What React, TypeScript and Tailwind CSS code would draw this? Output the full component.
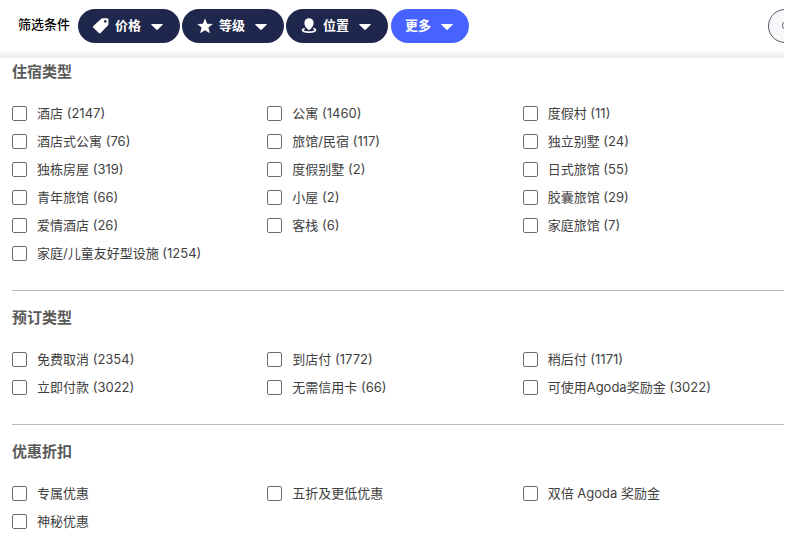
import { useState, type ReactNode } from 'react'

interface FilterOption {
  label: string
  count?: number
}

interface FilterGroup {
  title: string
  options: FilterOption[]
}

const groups: FilterGroup[] = [
  {
    title: '住宿类型',
    options: [
      { label: '酒店', count: 2147 },
      { label: '公寓', count: 1460 },
      { label: '度假村', count: 11 },
      { label: '酒店式公寓', count: 76 },
      { label: '旅馆/民宿', count: 117 },
      { label: '独立别墅', count: 24 },
      { label: '独栋房屋', count: 319 },
      { label: '度假别墅', count: 2 },
      { label: '日式旅馆', count: 55 },
      { label: '青年旅馆', count: 66 },
      { label: '小屋', count: 2 },
      { label: '胶囊旅馆', count: 29 },
      { label: '爱情酒店', count: 26 },
      { label: '客栈', count: 6 },
      { label: '家庭旅馆', count: 7 },
      { label: '家庭/儿童友好型设施', count: 1254 },
    ],
  },
  {
    title: '预订类型',
    options: [
      { label: '免费取消', count: 2354 },
      { label: '到店付', count: 1772 },
      { label: '稍后付', count: 1171 },
      { label: '立即付款', count: 3022 },
      { label: '无需信用卡', count: 66 },
      { label: '可使用Agoda奖励金', count: 3022 },
    ],
  },
  {
    title: '优惠折扣',
    options: [
      { label: '专属优惠' },
      { label: '五折及更低优惠' },
      { label: '双倍 Agoda 奖励金' },
      { label: '神秘优惠' },
    ],
  },
]

function TagIcon() {
  return (
    <svg viewBox="0 0 18 18" className="w-[18px] h-[18px] mr-[5px]" fill="currentColor" aria-hidden="true">
      <path
        fillRule="evenodd"
        d="M10.5 1.3h4.7a1.2 1.2 0 0 1 1.2 1.2v4.8a1.6 1.6 0 0 1-.5 1.1l-7.3 7.7a1.2 1.2 0 0 1-1.7 0L1.3 10.7a1.2 1.2 0 0 1 .1-1.7l7.9-7.2a1.8 1.8 0 0 1 1.2-.5ZM13.3 3.1a1.3 1.3 0 1 0 0 2.6 1.3 1.3 0 0 0 0-2.6Z"
      />
    </svg>
  )
}

function StarIcon() {
  return (
    <svg viewBox="0 0 18 18" className="w-[18px] h-[18px] mr-[5px]" fill="currentColor" aria-hidden="true">
      <path d="M9 1.2 11.1 6.7 16.8 7 12.4 10.6 13.9 16.3 9 13.2 4.1 16.3 5.6 10.6 1.2 7 6.9 6.7Z" />
    </svg>
  )
}

function LocationIcon() {
  return (
    <svg viewBox="0 0 18 18" className="w-[18px] h-[18px] mr-[5px]" fill="currentColor" aria-hidden="true">
      <path d="M9 1.2a4.5 4.5 0 0 1 4.6 4.7c0 2.5-1.3 4.4-2.6 5.6-.6.6-1 1.5-2 1.5s-1.4-.9-2-1.5c-1.3-1.2-2.6-3.1-2.6-5.6A4.5 4.5 0 0 1 9 1.2Z" />
      <path
        d="M4 11.7c-.9.3-1.5.8-1.5 1.3 0 1.2 2.9 2.2 6.5 2.2s6.500-1 6.500-2.200c0-.5-.6-1-1.500-1.300"
        fill="none"
        stroke="currentColor"
        strokeWidth="1.7"
        strokeLinecap="round"
      />
    </svg>
  )
}

interface FilterPillProps {
  label: string
  icon?: ReactNode
  active?: boolean
  onClick: () => void
}

function FilterPill({ label, icon, active, onClick }: FilterPillProps) {
  return (
    <button
      type="button"
      onClick={onClick}
      className={`h-[34px] pl-[14px] shrink-0 rounded-full flex items-center text-white text-[13px] font-bold ${
        icon ? 'pr-[17px]' : 'pr-4'
      } ${active ? 'ml-px bg-[#4762ff]' : 'bg-[#20274d] hover:bg-[#2b3360]'}`}
    >
      {icon}
      <span>{label}</span>
      <svg viewBox="0 0 12 6" className="w-3 h-[6px] ml-[10px] mt-[2px]" fill="currentColor" aria-hidden="true">
        <path d="M.6 0h10.8a.5.5 0 0 1 .3.8l-5.200 5a.7.7 0 0 1-1 0L.3.8A.5.5 0 0 1 .6 0Z" />
      </svg>
    </button>
  )
}

export default function App() {
  const [openMenu, setOpenMenu] = useState('more')
  const [selected, setSelected] = useState<string[]>([])

  const toggle = (label: string) => {
    setSelected((prev) =>
      prev.includes(label) ? prev.filter((item) => item !== label) : [...prev, label]
    )
  }

  return (
    <div className="mr-[2px] overflow-hidden bg-white font-['Inter','Noto_Sans_CJK_SC',sans-serif]">
      {/* Filter bar */}
      <header className="h-[58px] pt-[9px] pl-[18px] flex items-start bg-linear-to-b from-white from-85% to-[#ececec]">
        <span className="mr-2 shrink-0 text-[13px] leading-[30px] font-medium text-black">筛选条件</span>
        <div className="flex gap-[2px]">
          <FilterPill label="价格" icon={<TagIcon />} active={openMenu === 'price'} onClick={() => setOpenMenu('price')} />
          <FilterPill label="等级" icon={<StarIcon />} active={openMenu === 'rating'} onClick={() => setOpenMenu('rating')} />
          <FilterPill label="位置" icon={<LocationIcon />} active={openMenu === 'location'} onClick={() => setOpenMenu('location')} />
          <FilterPill label="更多" active={openMenu === 'more'} onClick={() => setOpenMenu('more')} />
        </div>
        <button
          type="button"
          aria-label="搜索"
          className="ml-auto -mr-[18px] w-[34px] h-[34px] shrink-0 rounded-full border border-[#555a66] bg-[#f8f8fb] flex items-center justify-center text-[#555a66]"
        >
          <svg viewBox="0 0 16 16" className="w-4 h-4" fill="none" stroke="currentColor" aria-hidden="true">
            <circle cx="10" cy="7.5" r="4.5" />
            <path d="M13.2 10.7 15.5 13" />
          </svg>
        </button>
      </header>

      {/* Filter groups */}
      <main className="pl-3 pt-[2px]">
        {groups.map((group) => (
          <fieldset
            key={group.title}
            className="pb-[23px] border-b border-[#b9b9b9] mb-[15px] last:mb-0 last:pb-0 last:border-b-0"
          >
            <legend className="mb-[15px] text-[15px] leading-6 font-semibold text-[#5a5a5a]">{group.title}</legend>
            <div className="grid grid-cols-3 pr-[6px]">
              {group.options.map((option) => (
                <label
                  key={option.label}
                  className="h-7 flex items-center text-[13px] leading-5 text-[#3f3f3f] whitespace-nowrap cursor-pointer"
                >
                  <input
                    type="checkbox"
                    checked={selected.includes(option.label)}
                    onChange={() => toggle(option.label)}
                    className="appearance-none w-[15px] h-[15px] mr-[10px] shrink-0 rounded-[2px] border border-[#6b6b6b] bg-white checked:bg-[#4762ff] checked:border-[#4762ff]"
                  />
                  <span>
                    {option.label}
                    {option.count !== undefined && ` (${option.count})`}
                  </span>
                </label>
              ))}
            </div>
          </fieldset>
        ))}
      </main>
    </div>
  )
}
